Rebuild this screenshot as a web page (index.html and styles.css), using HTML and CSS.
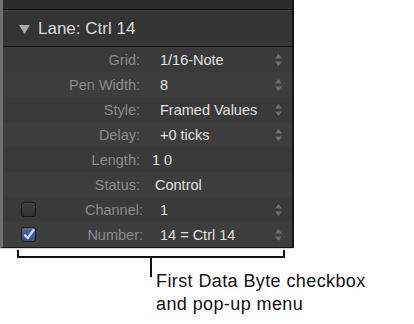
FILE: index.html
```html
<!DOCTYPE html>
<html>
<head>
<meta charset="utf-8">
<link rel="stylesheet" href="styles.css">
</head>
<body>
<div class="panel">
  <div class="strip"></div>
  <div class="header">
    <svg class="disclosure" width="11" height="9" viewBox="0 0 11 9"><path d="M0 0 H11 L5.5 9 Z" fill="#a9a9a9"/></svg>
    <span class="title">Lane: Ctrl 14</span>
  </div>
  <div class="rows">
    <div class="row odd"><div class="lab"><span class="ltxt">Grid:</span></div><div class="val">1/16-Note</div><svg class="step" width="7" height="12" viewBox="0 0 7 12"><path d="M3.5 0 L7 4.5 H0 Z M0 7.5 H7 L3.5 12 Z" fill="#6f6f6f"/></svg></div>
    <div class="row even"><div class="lab"><span class="ltxt">Pen Width:</span></div><div class="val">8</div><svg class="step" width="7" height="12" viewBox="0 0 7 12"><path d="M3.5 0 L7 4.5 H0 Z M0 7.5 H7 L3.5 12 Z" fill="#6f6f6f"/></svg></div>
    <div class="row odd"><div class="lab"><span class="ltxt">Style:</span></div><div class="val">Framed Values</div><svg class="step" width="7" height="12" viewBox="0 0 7 12"><path d="M3.5 0 L7 4.5 H0 Z M0 7.5 H7 L3.5 12 Z" fill="#6f6f6f"/></svg></div>
    <div class="row even"><div class="lab"><span class="ltxt">Delay:</span></div><div class="val">+0 ticks</div><svg class="step" width="7" height="12" viewBox="0 0 7 12"><path d="M3.5 0 L7 4.5 H0 Z M0 7.5 H7 L3.5 12 Z" fill="#6f6f6f"/></svg></div>
    <div class="row odd"><div class="lab"><span class="ltxt">Length:</span></div><div class="val near">1 0</div></div>
    <div class="row even"><div class="lab"><span class="ltxt">Status:</span></div><div class="val mid">Control</div></div>
    <div class="row odd"><div class="lab"><span class="cb"></span><span class="ltxt wide">Channel:</span></div><div class="val">1</div><svg class="step" width="7" height="12" viewBox="0 0 7 12"><path d="M3.5 0 L7 4.5 H0 Z M0 7.5 H7 L3.5 12 Z" fill="#6f6f6f"/></svg></div>
    <div class="row even"><div class="lab"><span class="cb on"><svg width="12" height="12" viewBox="0 0 12 12"><path d="M2 6.2 L4.8 9.2 L10.5 1" fill="none" stroke="#c4d8ff" stroke-width="2.2" stroke-linecap="round" stroke-linejoin="round"/></svg></span><span class="ltxt wide">Number:</span></div><div class="val">14 = Ctrl 14</div><svg class="step" width="7" height="12" viewBox="0 0 7 12"><path d="M3.5 0 L7 4.5 H0 Z M0 7.5 H7 L3.5 12 Z" fill="#6f6f6f"/></svg></div>
  </div>
</div>
<div class="shadow"></div>
<div class="bracket"></div>
<div class="callout">
  <div class="tick"></div>
  <div class="note">First Data Byte checkbox<br>and pop-up menu</div>
</div>
</body>
</html>
```
FILE: styles.css
```css
html, body {
  margin: 0;
  padding: 0;
  background: #ffffff;
}
body {
  width: 414px;
  height: 324px;
  overflow: hidden;
  font-family: "Liberation Sans", Arial, sans-serif;
}
.panel {
  width: 289px;
  border-left: 3px solid #707070;
  border-right: 2px solid #141414;
  border-bottom: 1px solid #141414;
  box-shadow: inset 1px 0 0 #1a1a1a;
  background: #3a3a3a;
}
.strip {
  height: 9px;
  background: #2b2b2b;
  border-bottom: 1px solid #121212;
}
.header {
  height: 35px;
  background: #343434;
  border-top: 1px solid #3e3e3e;
  border-bottom: 1px solid #151515;
  display: flex;
  align-items: center;
  padding-left: 16px;
}
.disclosure {
  margin-top: 1px;
}
.title {
  margin-left: 8px;
  font-size: 17px;
  color: #dadada;
}
.rows {
  display: flex;
  flex-direction: column;
}
.row {
  height: 25px;
  display: flex;
  align-items: center;
  font-size: 14.5px;
}
.row.odd { background: #3a3a3a; }
.row.even { background: #3d3d3d; }
.lab {
  width: 137px;
  display: flex;
  align-items: center;
  justify-content: flex-end;
  color: #8b8b8b;
}
.ltxt.wide {
  margin-right: -3px;
}
.cb {
  width: 13px;
  height: 13px;
  margin-left: 18px;
  margin-right: auto;
  border: 1px solid #161616;
  border-radius: 3px;
  background: linear-gradient(#3c3c3c, #333333);
  box-shadow: inset 0 1px 0 #4a4a4a;
  display: flex;
  align-items: center;
  justify-content: center;
}
.cb.on {
  background: linear-gradient(#4d6694, #3a5382);
  box-shadow: inset 0 1px 0 #6179a6;
}
.val {
  margin-left: 20px;
  flex: 1;
  color: #e2e2e2;
}
.val.near { margin-left: 12px; }
.val.mid { margin-left: 15px; }
.step {
  margin-right: 10px;
}
.shadow {
  width: 294px;
  height: 1px;
  background: #d4d4d4;
}
.bracket {
  margin-left: 17px;
  margin-top: 1px;
  width: 264px;
  height: 6px;
  border: 2px solid #111;
  border-top: none;
}
.callout {
  display: flex;
  align-items: flex-start;
}
.tick {
  margin-left: 150px;
  width: 2px;
  height: 19px;
  background: #111;
}
.note {
  margin-left: 4px;
  margin-top: 12px;
  font-size: 18px;
  letter-spacing: 0.4px;
  line-height: 22.5px;
  color: #111;
}
```
